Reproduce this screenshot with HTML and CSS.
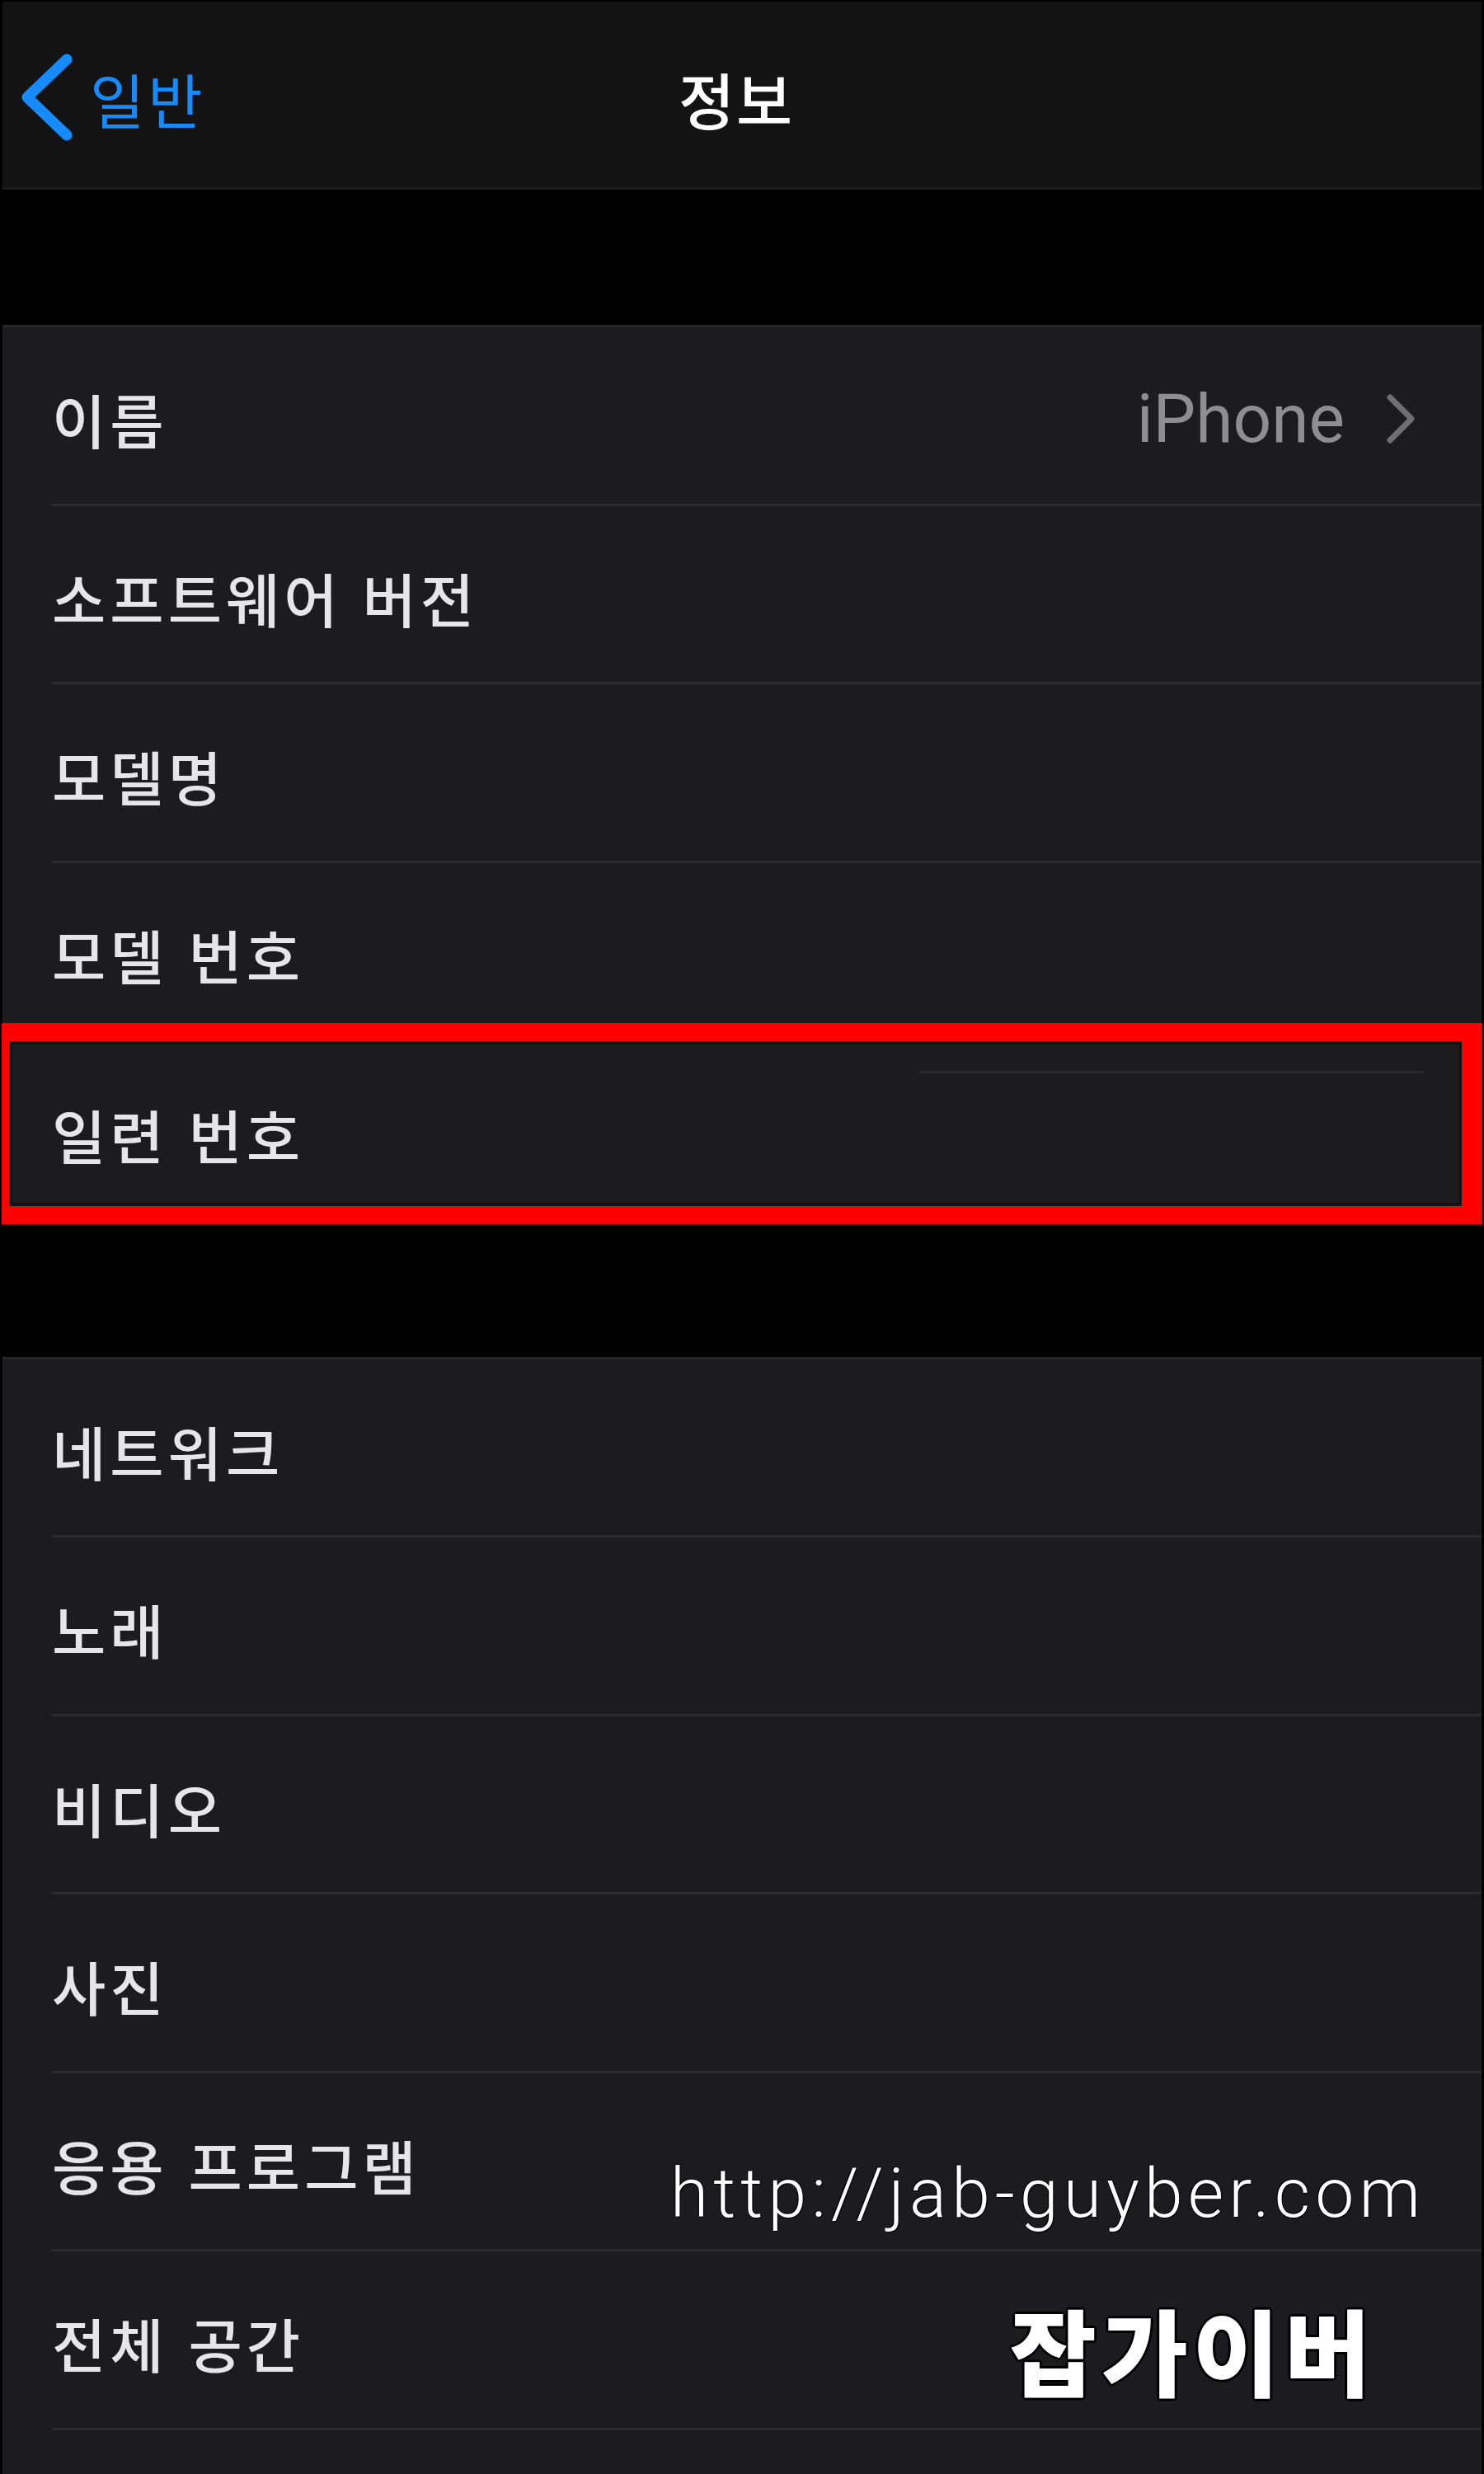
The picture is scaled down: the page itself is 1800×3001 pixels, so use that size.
FILE: index.html
```html
<!DOCTYPE html>
<html lang="ko">
<head>
<meta charset="utf-8">
<title>정보</title>
<link rel="stylesheet" href="styles.css">
</head>
<body>
<div class="page">
  <header class="nav">
    <div class="back">
      <svg class="back-chevron" width="70" height="110" viewBox="0 0 70 110">
        <path d="M56 8 L8 54 L56 100" fill="none" stroke="#168bff" stroke-width="13" stroke-linecap="round" stroke-linejoin="round"/>
      </svg>
      <span class="back-label">일반</span>
    </div>
    <h1 class="title">정보</h1>
    <div class="nav-right"></div>
  </header>

  <div class="spacer"></div>

  <section class="group">
    <div class="row">
      <div class="row-inner">
        <span class="label">이름</span>
        <span class="detail">
          <span class="value">iPhone</span>
          <svg class="chev" width="36" height="62" viewBox="0 0 36 62">
            <path d="M5 5 L31 31 L5 57" fill="none" stroke="#6e6e73" stroke-width="7" stroke-linecap="round" stroke-linejoin="round"/>
          </svg>
        </span>
      </div>
    </div>
    <div class="row"><div class="row-inner"><span class="label">소프트웨어 버전</span></div></div>
    <div class="row"><div class="row-inner"><span class="label">모델명</span></div></div>
    <div class="row"><div class="row-inner"><span class="label">모델 번호</span></div></div>
    <div class="row last"><div class="row-inner"><span class="label">일련 번호</span></div></div>
  </section>

  <div class="spacer spacer-2"></div>

  <section class="group">
    <div class="row"><div class="row-inner"><span class="label">네트워크</span></div></div>
    <div class="row"><div class="row-inner"><span class="label">노래</span></div></div>
    <div class="row"><div class="row-inner"><span class="label">비디오</span></div></div>
    <div class="row"><div class="row-inner"><span class="label">사진</span></div></div>
    <div class="row"><div class="row-inner"><span class="label">응용 프로그램</span></div></div>
    <div class="row"><div class="row-inner"><span class="label">전체 공간</span></div></div>
    <div class="row"><div class="row-inner"></div></div>
  </section>

  <div class="highlight">
    <div class="highlight-line"></div>
  </div>

  <div class="wm-url">http://jab-guyber.com</div>
  <div class="wm-name">잡가이버</div>
</div>
</body>
</html>
```

FILE: styles.css
```css
html, body {
  margin: 0;
  padding: 0;
  background: #000;
}

body {
  width: 1800px;
  height: 3001px;
  overflow: hidden;
  font-family: "Noto Sans CJK KR", "Noto Sans", sans-serif;
}

.page {
  position: relative;
  width: 1800px;
  height: 3001px;
  box-sizing: border-box;
  padding: 2px 3px 3px 3px;
  background: #000;
  overflow: hidden;
  display: flex;
  flex-direction: column;
}

/* ---------- navigation bar ---------- */
.nav {
  flex: 0 0 auto;
  box-sizing: content-box;
  height: 217px;
  padding-top: 8px;
  border-bottom: 3px solid #1b1b1b;
  background: #131313;
  display: grid;
  grid-template-columns: 1fr auto 1fr;
  align-items: center;
}

.back {
  display: flex;
  align-items: center;
  gap: 14px;
  padding-left: 22px;
  color: #168bff;
}

.back-chevron {
  display: block;
}

.back-label {
  font-size: 72px;
  line-height: 1;
  letter-spacing: 4px;
  color: #168bff;
}

.title {
  margin: 0;
  font-size: 74px;
  font-weight: 500;
  line-height: 1;
  letter-spacing: 2px;
  color: #ffffff;
  padding-right: 14px;
}

/* ---------- spacing between groups ---------- */
.spacer {
  flex: 0 0 auto;
  height: 164px;
  background: #000;
}

.spacer-2 {
  height: 166px;
}

/* ---------- grouped list ---------- */
.group {
  flex: 0 0 auto;
  background: #1c1c1e;
  border-top: 3px solid #262628;
}

.row {
  height: 216.5px;
  padding-left: 60px;
  box-sizing: border-box;
}

.row-inner {
  height: 100%;
  box-sizing: border-box;
  border-bottom: 3px solid #2b2b2d;
  display: flex;
  align-items: center;
  justify-content: space-between;
  padding-top: 8px;
}

.row.last .row-inner {
  border-bottom: none;
}

.label {
  font-size: 71px;
  font-weight: 500;
  line-height: 1;
  letter-spacing: 5px;
  color: #e6e6e8;
}

.detail {
  display: flex;
  align-items: center;
  gap: 50px;
  padding-right: 80px;
}

.value {
  font-family: Roboto, "Liberation Sans", sans-serif;
  font-size: 82px;
  line-height: 1;
  color: #8d8d92;
}

.chev {
  display: block;
}

/* ---------- red annotation box ---------- */
.highlight {
  position: absolute;
  left: 2px;
  top: 1241px;
  width: 1796px;
  height: 244px;
  box-sizing: border-box;
  border-style: solid;
  border-color: #ff0000;
  border-width: 22px 25px 22px 9px;
  box-shadow: inset 0 0 0 4px #0c1818;
  background: transparent;
}

.highlight-line {
  position: absolute;
  left: 1103px;
  top: 36px;
  width: 613px;
  height: 3px;
  background: #28282a;
}

/* ---------- watermark ---------- */
.wm-url {
  position: absolute;
  left: 813px;
  top: 2619px;
  font-family: Roboto, "Liberation Sans", sans-serif;
  font-weight: 300;
  font-size: 84px;
  line-height: 1;
  letter-spacing: 6.1px;
  color: #ffffff;
  white-space: nowrap;
  text-shadow: 0 0 2px #000, 1px 1px 0 #000, -1px -1px 0 #000;
}

.wm-name {
  position: absolute;
  left: 1225px;
  top: 2792px;
  font-family: "Noto Sans CJK KR", sans-serif;
  font-weight: 900;
  font-size: 114px;
  line-height: 1;
  letter-spacing: 6px;
  color: #ffffff;
  white-space: nowrap;
  text-shadow:
    3px 0 0 #000, -3px 0 0 #000, 0 3px 0 #000, 0 -3px 0 #000,
    2px 2px 0 #000, -2px -2px 0 #000, 2px -2px 0 #000, -2px 2px 0 #000;
}
```
